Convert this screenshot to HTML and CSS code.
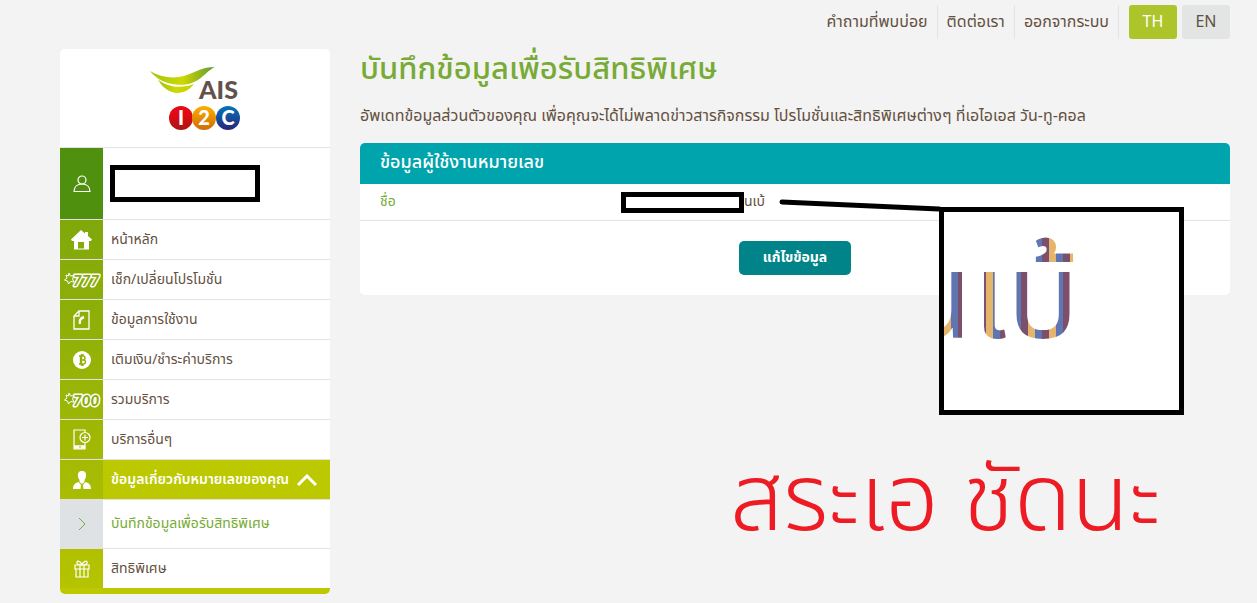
FILE: index.html
```html
<!DOCTYPE html>
<html lang="th">
<head>
  <meta charset="UTF-8">
  <title>AIS I2C</title>
  <meta name="viewport" content="width=device-width, initial-scale=1.0">
  <link rel="stylesheet" href="styles.css">
</head>
<body>

<header class="topbar">
  <nav class="topnav">
    <a href="#">คำถามที่พบบ่อย</a>
    <a href="#">ติดต่อเรา</a>
    <a href="#">ออกจากระบบ</a>
  </nav>
  <div class="lang">
    <button type="button" class="active">TH</button>
    <button type="button">EN</button>
  </div>
</header>

<div class="page">
  <aside class="sidebar">
    <a href="#" class="logo" aria-label="AIS I2C">
      <svg width="94" height="66" viewBox="0 0 94 66">
        <defs>
          <linearGradient id="leaf" x1="0" x2="1"><stop offset="0" stop-color="#a5c611"/><stop offset=".5" stop-color="#cdd800"/><stop offset="1" stop-color="#5f9a33"/></linearGradient>
          <linearGradient id="leaf-small" x1="0" x2="1"><stop offset="0" stop-color="#9fc214"/><stop offset=".5" stop-color="#cdd800"/><stop offset="1" stop-color="#c3d204"/></linearGradient>
          <linearGradient id="red" x2="0" y2="1"><stop offset=".3" stop-color="#e50914"/><stop offset="1" stop-color="#a81612"/></linearGradient>
          <linearGradient id="orange" x2="0" y2="1"><stop offset="0" stop-color="#fbb000"/><stop offset="1" stop-color="#cf6c08"/></linearGradient>
          <linearGradient id="blue" x2="0" y2="1"><stop offset="0" stop-color="#0075bd"/><stop offset="1" stop-color="#2c2577"/></linearGradient>
        </defs>
        <path d="M2 5C12 11 24 13 36 10C48 6 54 1 67 1C58 5 53 16 38 18.500C21 20 9 14 2 5Z" fill="url(#leaf)"/>
        <path d="M10 13.500C20 22 35 22.500 46 18C36 31 19 30 10 13.500Z" fill="url(#leaf-small)"/>
        <text x="51" y="33" class="logo-ais">AIS</text>
        <circle cx="33" cy="52" r="12" fill="url(#red)"/>
        <circle cx="80" cy="52" r="12" fill="url(#blue)"/>
        <circle cx="56" cy="52" r="12" fill="url(#orange)"/>
        <text x="33" y="59" class="logo-i2c">I</text>
        <text x="56" y="59" class="logo-i2c">2</text>
        <text x="80" y="59" class="logo-i2c">C</text>
      </svg>
    </a>

    <div class="user">
      <span class="icon">
        <svg width="18" height="18" viewBox="0 0 18 18" fill="none" stroke="#fff" stroke-width="1.2"><circle cx="9" cy="5" r="4"/><path d="M1 16.500C1 12 4 9 9 9S17 12 17 16.500Z"/></svg>
      </span>
      <span class="redacted redacted-user"></span>
    </div>

    <ul class="menu">
      <li><a href="#">
        <span class="icon"><svg width="21" height="20" viewBox="0 0 21 20"><path d="M10 0L14 3.500V2H17V6L21 9.500L20 11H18V19.500H3V11H1L0 9.500Z" fill="#fff"/><path d="M7 12H13V18.500H7Z" fill="#85aa0a"/></svg></span>
        หน้าหลัก</a></li>
      <li><a href="#">
        <span class="icon"><svg width="38" height="18" viewBox="0 0 38 18"><path d="M6 2L7.500 5L11 4.500L9.500 8L11 11L7.500 10.500L5.500 13L4.500 10L1.500 9L4 7L3 4L5.500 5Z" class="star"/><text x="10" y="15" class="code">777</text></svg></span>
        เช็ก/เปลี่ยนโปรโมชั่น</a></li>
      <li><a href="#">
        <span class="icon"><svg width="17" height="20" viewBox="0 0 17 20" fill="none" stroke="#fff" stroke-width="1.300"><path d="M6 1H16V19H1V6ZM6 1V6H1"/><path d="M7 14C6 10 8 8 11 7" stroke-width="2.400"/></svg></span>
        ข้อมูลการใช้งาน</a></li>
      <li><a href="#">
        <span class="icon"><svg width="18" height="18" viewBox="0 0 18 18"><circle cx="9" cy="9" r="9" fill="#fff"/><path d="M6 5H10Q12 5 12 7T10 9H7M10 9Q12.500 9 12.500 11T10 13H6M7.500 5V13M8.500 3V15M10 3V5M10 13V15" fill="none" stroke="#95b008" stroke-width="1.400"/></svg></span>
        เติมเงิน/ชำระค่าบริการ</a></li>
      <li><a href="#">
        <span class="icon"><svg width="38" height="18" viewBox="0 0 38 18"><path d="M6 2L7.500 5L11 4.500L9.500 8L11 11L7.500 10.500L5.500 13L4.500 10L1.500 9L4 7L3 4L5.500 5Z" class="star"/><text x="10" y="15" class="code">700</text></svg></span>
        รวมบริการ</a></li>
      <li><a href="#">
        <span class="icon"><svg class="phone" width="18" height="21" viewBox="0 0 18 21" fill="none" stroke="#fff" stroke-width="1.200"><path d="M12 3V1H1V20H12V14"/><path d="M1 18H12" stroke-width="3.500"/><circle cx="12" cy="8.500" r="5"/><path d="M12 5.500V11.500M9 8.500H15"/><path d="M6 18H8" stroke="#a5b804"/></svg></span>
        บริการอื่นๆ</a></li>
      <li class="open"><a href="#">
        <span class="icon"><svg width="18" height="18" viewBox="0 0 18 18" fill="#fff"><path d="M9 0C12 0 13.500 2 13 5C13 7 12 8 11.500 9V11L9 13L6.500 11V9C6 8 5 7 5 5C4.500 2 6 0 9 0Z"/><path d="M5.500 11L9 15L12.500 11C16 12 18 14 18 18H0C0 14 2 12 5.500 11Z"/><path d="M8 14H10L10.500 18H7.500Z" fill="#adbf02"/></svg></span>
        <span class="label">ข้อมูลเกี่ยวกับหมายเลขของคุณ</span>
        <svg class="chevron" width="20" height="12" viewBox="0 0 20 12" fill="none" stroke="#fff" stroke-width="3"><path d="M1 11L10 2L19 11"/></svg>
      </a></li>
      <li class="sub"><a href="#">
        <span class="icon"><svg width="8" height="14" viewBox="0 0 8 14" fill="none" stroke="#77ab35"><path d="M1 1L7 7L1 13"/></svg></span>
        บันทึกข้อมูลเพื่อรับสิทธิพิเศษ</a></li>
      <li><a href="#">
        <span class="icon"><svg width="16" height="18" viewBox="0 0 16 18" fill="none" stroke="#fff" stroke-width="1.200"><path d="M1 5H15V9H1ZM2 9V17H14V9M6 5V17M10 5V17M8 5C5 5 2 4 3 2S7 2 8 5C9 2 12 0 13 2S11 5 8 5"/></svg></span>
        สิทธิพิเศษ</a></li>
    </ul>
  </aside>

  <main class="content">
    <h1>บันทึกข้อมูลเพื่อรับสิทธิพิเศษ</h1>
    <p class="intro">อัพเดทข้อมูลส่วนตัวของคุณ เพื่อคุณจะได้ไม่พลาดข่าวสารกิจกรรม โปรโมชั่นและสิทธิพิเศษต่างๆ ที่เอไอเอส วัน-ทู-คอล</p>

    <section class="panel">
      <h2>ข้อมูลผู้ใช้งานหมายเลข</h2>
      <table>
        <tr>
          <th scope="row">ชื่อ</th>
          <td><div class="name"><span class="redacted redacted-name"></span>นเบ้</div></td>
        </tr>
      </table>
      <div class="actions">
        <button type="button">แก้ไขข้อมูล</button>
      </div>
    </section>

    <!-- notes drawn over the page -->
    <svg class="pointer" width="162" height="14" viewBox="0 0 162 14"><path d="M3 4L160 11" stroke="#000" stroke-width="5" stroke-linecap="round"/></svg>
    <div class="callout"><span>นเบ้</span></div>
    <p class="scribble">สระเอ ชัดนะ</p>
  </main>
</div>

</body>
</html>
```
FILE: styles.css
```css
* {
  box-sizing: border-box;
}
body {
  margin: 0;
  padding: 5px 27px 9px 60px;
  background: #f3f3f3;
  color: #64503f;
  font-family: "Noto Sans Thai", "Roboto", "Liberation Sans", sans-serif;
  font-size: 14px;
  line-height: 20px;
}
a {
  color: inherit;
  text-decoration: none;
}
button {
  border: 0;
  font: inherit;
  cursor: pointer;
}

/* top bar */
.topbar {
  display: flex;
  justify-content: flex-end;
  gap: 10px;
  height: 34px;
  font-size: 16px;
}
.topnav {
  display: flex;
}
.topnav a {
  padding: 7px 9px;
  border-right: 1px solid #e3e3e3;
}
.lang {
  display: flex;
  gap: 5px;
}
.lang button {
  width: 48px;
  background: #e3e5e5;
  color: #64503f;
  border-radius: 3px;
}
.lang .active {
  background: #adc52b;
  color: #fff;
}

.page {
  display: flex;
  gap: 30px;
  align-items: flex-start;
  padding-top: 10px;
}

/* sidebar */
.sidebar {
  flex: 0 0 270px;
  background: #fff;
  border-radius: 5px;
  border-bottom: 6px solid #bcc800;
  overflow: hidden;
}
.logo {
  display: flex;
  justify-content: center;
  padding: 17px 0 15px;
  border-bottom: 1px solid #e3e3e3;
}
.logo-ais {
  font: 900 25px "Lato", sans-serif;
  fill: #64514b;
}
.logo-i2c {
  font: 900 20px "Lato", sans-serif;
  fill: #fff;
  text-anchor: middle;
}
.icon {
  display: flex;
  flex: 0 0 43px;
  align-self: stretch;
  align-items: center;
  justify-content: center;
}
.user {
  display: flex;
  align-items: center;
  gap: 7px;
  height: 72px;
  border-bottom: 1px solid #e6e0e3;
}
.user .icon {
  background: #50900f;
}
.redacted {
  background: #fff;
  border: 5px solid #000;
}
.redacted-user {
  width: 150px;
  height: 37px;
}
.menu {
  margin: 0;
  padding: 0;
  list-style: none;
  background: linear-gradient(#80a80b, #b6c300) left / 43px 100% no-repeat;
}
.menu li {
  border-bottom: 1px solid #e6e0e3;
}
.menu li:last-child {
  border-bottom: 0;
}
.menu a {
  display: flex;
  align-items: center;
  gap: 8px;
  height: 39px;
}
.menu .open a {
  background: linear-gradient(#bcc800, #bcc800) right / calc(100% - 43px) 100% no-repeat;
  color: #fff;
  font-weight: 600;
}
.label {
  flex: 0 1 172px;
  white-space: nowrap;
}
.chevron {
  flex: none;
  margin-left: auto;
  margin-right: 14px;
}
.menu .sub a {
  height: 48px;
  color: #77ab35;
}
.sub .icon {
  background: #dee2e5;
}
.star {
  fill: #8aad0a;
  stroke: #fff;
  stroke-linejoin: round;
}
.code {
  font: italic 900 15px "Lato", sans-serif;
  fill: #8aad0a;
  stroke: #fff;
  stroke-width: 3px;
  stroke-linejoin: round;
  paint-order: stroke;
}

/* content */
.content {
  flex: 1;
  min-width: 0;
  position: relative;
}
h1 {
  margin: 0;
  color: #77ab35;
  font-size: 31px;
  line-height: 42px;
  font-weight: 500;
}
.intro {
  margin: 15px 0 17px;
  font-size: 16px;
}
.panel {
  background: #fff;
  border-radius: 5px;
  overflow: hidden;
}
.panel h2 {
  margin: 0;
  padding: 10px 20px 11px;
  background: #00a4ad;
  color: #fff;
  font-size: 18px;
  line-height: 20px;
  font-weight: 500;
}
.panel table {
  width: 100%;
  border-collapse: collapse;
}
.panel tr {
  border-bottom: 1px solid #e3e3e3;
}
.panel th {
  width: 30%;
  padding: 8px 20px;
  color: #77ab35;
  font-weight: normal;
  text-align: left;
}
.panel td {
  padding: 0;
}
.name {
  display: flex;
  align-items: center;
}
.redacted-name {
  width: 123px;
  height: 21px;
}
.actions {
  padding: 20px;
  text-align: center;
}
.actions button {
  height: 34px;
  padding: 0 24px;
  background: #008489;
  color: #fff;
  border-radius: 5px;
  font-weight: bold;
}

/* notes */
.pointer {
  position: absolute;
  left: 419px;
  top: 149px;
}
.callout {
  position: absolute;
  left: 579px;
  top: 158px;
  width: 245px;
  height: 208px;
  background: #fff;
  border: 5px solid #000;
  overflow: hidden;
}
.callout span {
  display: block;
  color: transparent;
  font-size: 120px;
  line-height: 180px;
  text-indent: -45px;
  background: repeating-linear-gradient(90deg, #e6b56c 0 7px, #6076b2 7px 14px, #7c4f6d 14px 21px);
  background-clip: text;
}
.scribble {
  position: absolute;
  left: 370px;
  top: 382px;
  margin: 0;
  color: #ed1c24;
  font-size: 94px;
  font-weight: 300;
  line-height: 140px;
  white-space: nowrap;
}
```
